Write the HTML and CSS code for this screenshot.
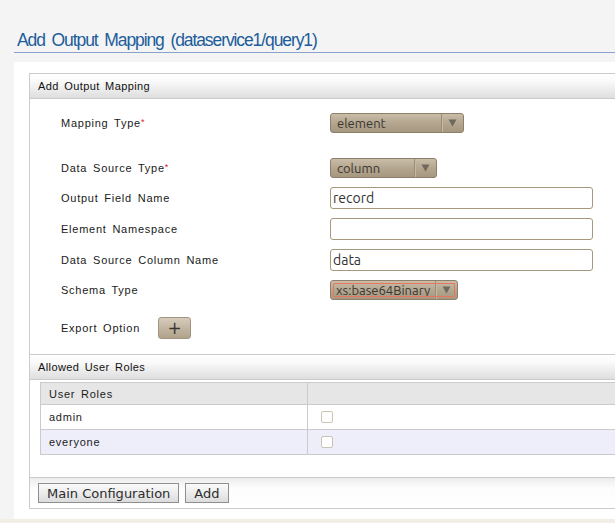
FILE: index.html
```html
<!DOCTYPE html>
<html>
<head>
<meta charset="utf-8">
<title>Add Output Mapping</title>
<link rel="stylesheet" href="styles.css">
</head>
<body>
<h1 class="page-title">Add Output Mapping (dataservice1/query1)</h1>
<div class="content">
  <div class="box">
    <div class="box-header">Add Output Mapping</div>
    <div class="form">
      <div class="label">Mapping Type<span class="req">*</span></div>
      <div class="control">
        <div class="select sel-element"><span class="select-text">element</span><span class="select-arrow"><svg width="9" height="8" viewBox="0 0 9 8"><path d="M0.5 0.5h8l-4 7z" fill="#6f685d"/></svg></span></div>
      </div>
      <div class="spacer"></div>
      <div class="label">Data Source Type<span class="req">*</span></div>
      <div class="control">
        <div class="select sel-column"><span class="select-text">column</span><span class="select-arrow"><svg width="9" height="8" viewBox="0 0 9 8"><path d="M0.5 0.5h8l-4 7z" fill="#6f685d"/></svg></span></div>
      </div>
      <div class="label">Output Field Name</div>
      <div class="control"><input class="text-input" type="text" value="record"></div>
      <div class="label">Element Namespace</div>
      <div class="control"><input class="text-input" type="text" value=""></div>
      <div class="label">Data Source Column Name</div>
      <div class="control"><input class="text-input" type="text" value="data"></div>
      <div class="label">Schema Type</div>
      <div class="control">
        <div class="select sel-schema focused"><span class="select-text">xs:base64Binary</span><span class="select-arrow"><svg width="9" height="8" viewBox="0 0 9 8"><path d="M0.5 0.5h8l-4 7z" fill="#6f685d"/></svg></span><span class="focus-ring"></span></div>
      </div>
      <div class="export-row">
        <span class="label">Export Option</span>
        <button class="plus-btn" type="button">+</button>
      </div>
    </div>
    <div class="box-header section">Allowed User Roles</div>
    <div class="roles">
      <table class="roles-table">
        <thead>
          <tr><th class="col-role">User Roles</th><th></th></tr>
        </thead>
        <tbody>
          <tr><td class="col-role">admin</td><td><input class="checkbox" type="checkbox"></td></tr>
          <tr class="alt"><td class="col-role">everyone</td><td><input class="checkbox" type="checkbox"></td></tr>
        </tbody>
      </table>
    </div>
    <div class="button-bar">
      <button class="btn" type="button">Main Configuration</button>
      <button class="btn" type="button">Add</button>
    </div>
  </div>
</div>
<div class="footer-strip"></div>
</body>
</html>
```

FILE: styles.css
```css
html, body {
  margin: 0;
  padding: 0;
}
body {
  background: #f4f4f4;
  font-family: "Liberation Sans", Arial, sans-serif;
  color: #222;
  height: 523px;
  overflow: hidden;
}
.page-title {
  margin: 28px 0 0 14px;
  padding-left: 3px;
  font-family: "Liberation Sans", Arial, sans-serif;
  font-weight: normal;
  font-size: 17.5px;
  line-height: 24px;
  letter-spacing: -1.1px;
  word-spacing: 3px;
  color: #1d5d9b;
  border-bottom: 1px solid #88a4cc;
}
.content {
  margin: 9px 0 0 14px;
  padding: 11px 0 10px 15px;
  background: #fff;
}
.box {
  border: 1px solid #cbcbcb;
  border-right: none;
}
.box-header {
  height: 24px;
  line-height: 25px;
  padding-left: 8px;
  font-size: 11px;
  letter-spacing: 0.4px;
  word-spacing: 2px;
  color: #111;
  background: linear-gradient(#ffffff, #fafafa 30%, #dedede);
  border-bottom: 1px solid #cbcbcb;
}
.box-header.section {
  border-top: 1px solid #cbcbcb;
}
.form {
  display: grid;
  grid-template-columns: 269px 1fr;
  row-gap: 9px;
  padding: 14px 0 15px 31px;
  align-items: center;
}
.label {
  font-size: 11px;
  letter-spacing: 0.75px;
  word-spacing: 2px;
  color: #1a1a1a;
}
.req {
  color: #e0201b;
  font-size: 9px;
  position: relative;
  top: -2px;
  margin-left: 0;
}
.spacer {
  grid-column: 1 / -1;
  height: 7px;
}
.control {
  display: flex;
  align-items: center;
}
.select {
  position: relative;
  display: flex;
  height: 20px;
  box-sizing: border-box;
  border: 1px solid #8e7f6a;
  border-radius: 3px;
  background: linear-gradient(#c9bda9, #b2a48d 55%, #a69780);
  font-family: Ubuntu, "Open Sans", "DejaVu Sans", sans-serif;
  font-size: 13px;
  color: #3a3632;
  overflow: hidden;
}
.sel-element { width: 134px; }
.sel-column { width: 107px; }
.sel-schema { width: 128px; }
.select-text {
  flex: 1;
  padding-left: 6px;
  line-height: 18px;
  white-space: nowrap;
}
.sel-schema .select-text { padding-left: 5px; }
.select-arrow {
  width: 21px;
  display: flex;
  align-items: center;
  justify-content: center;
  border-left: 1px solid #9c8d77;
  box-shadow: inset 1px 0 0 #c5b9a6;
}
.focus-ring {
  position: absolute;
  left: 2px;
  top: 2px;
  right: 2px;
  bottom: 2px;
  border: 1px solid #e6765d;
  border-radius: 1px;
}
.text-input {
  width: 263px;
  height: 22px;
  box-sizing: border-box;
  margin: 0;
  padding: 0 2px;
  border: 1px solid #a7977d;
  border-radius: 3px;
  background: #fff;
  font-family: Ubuntu, "Open Sans", "DejaVu Sans", sans-serif;
  font-size: 14px;
  color: #333;
  outline: none;
}
.export-row {
  grid-column: 1 / -1;
  display: flex;
  align-items: center;
  gap: 18px;
  margin-top: 8px;
}
.plus-btn {
  width: 33px;
  height: 22px;
  margin: 0;
  padding: 0;
  border: 1px solid #a1937d;
  border-radius: 3px;
  background: linear-gradient(#d6ccbc, #bfb29d 60%, #b0a28b);
  font-family: "DejaVu Sans", sans-serif;
  font-size: 17px;
  line-height: 18px;
  color: #3b3630;
}
.roles {
  padding: 2px 0 22px 10px;
}
.roles-table {
  width: 100%;
  border-collapse: collapse;
  font-size: 11px;
  letter-spacing: 0.75px;
  word-spacing: 2px;
}
.roles-table th,
.roles-table td {
  border: 1px solid #cbcbcb;
  border-right: none;
  text-align: left;
  font-weight: normal;
  padding: 0 0 0 8px;
  color: #1a1a1a;
}
.roles-table th {
  height: 21px;
  background: #e6e6e6;
}
.roles-table td {
  height: 24px;
}
.roles-table .col-role {
  width: 258px;
}
.roles-table th + th,
.roles-table td + td {
  padding-left: 13px;
}
.roles-table tr.alt td {
  background: #eeeefa;
}
.checkbox {
  appearance: none;
  -webkit-appearance: none;
  display: block;
  width: 12px;
  height: 12px;
  margin: 0;
  border: 1px solid #cbc3b4;
  border-radius: 2px;
  background: #fff;
  box-sizing: border-box;
}
.button-bar {
  display: flex;
  gap: 6px;
  padding: 5px 0 5px 8px;
  border-top: 1px solid #cbcbcb;
  background: linear-gradient(#ececec, #fdfdfd 35%, #ffffff);
}
.btn {
  height: 20px;
  margin: 0;
  padding: 0 8px;
  border: 1px solid #8f8f8f;
  background: linear-gradient(#fbfbfb, #ececec 50%, #dcdcdc);
  font-family: "DejaVu Sans", sans-serif;
  font-size: 13px;
  line-height: 17px;
  color: #2c2c2c;
}
.footer-strip {
  height: 4px;
  background: #f2eee5;
}
```
